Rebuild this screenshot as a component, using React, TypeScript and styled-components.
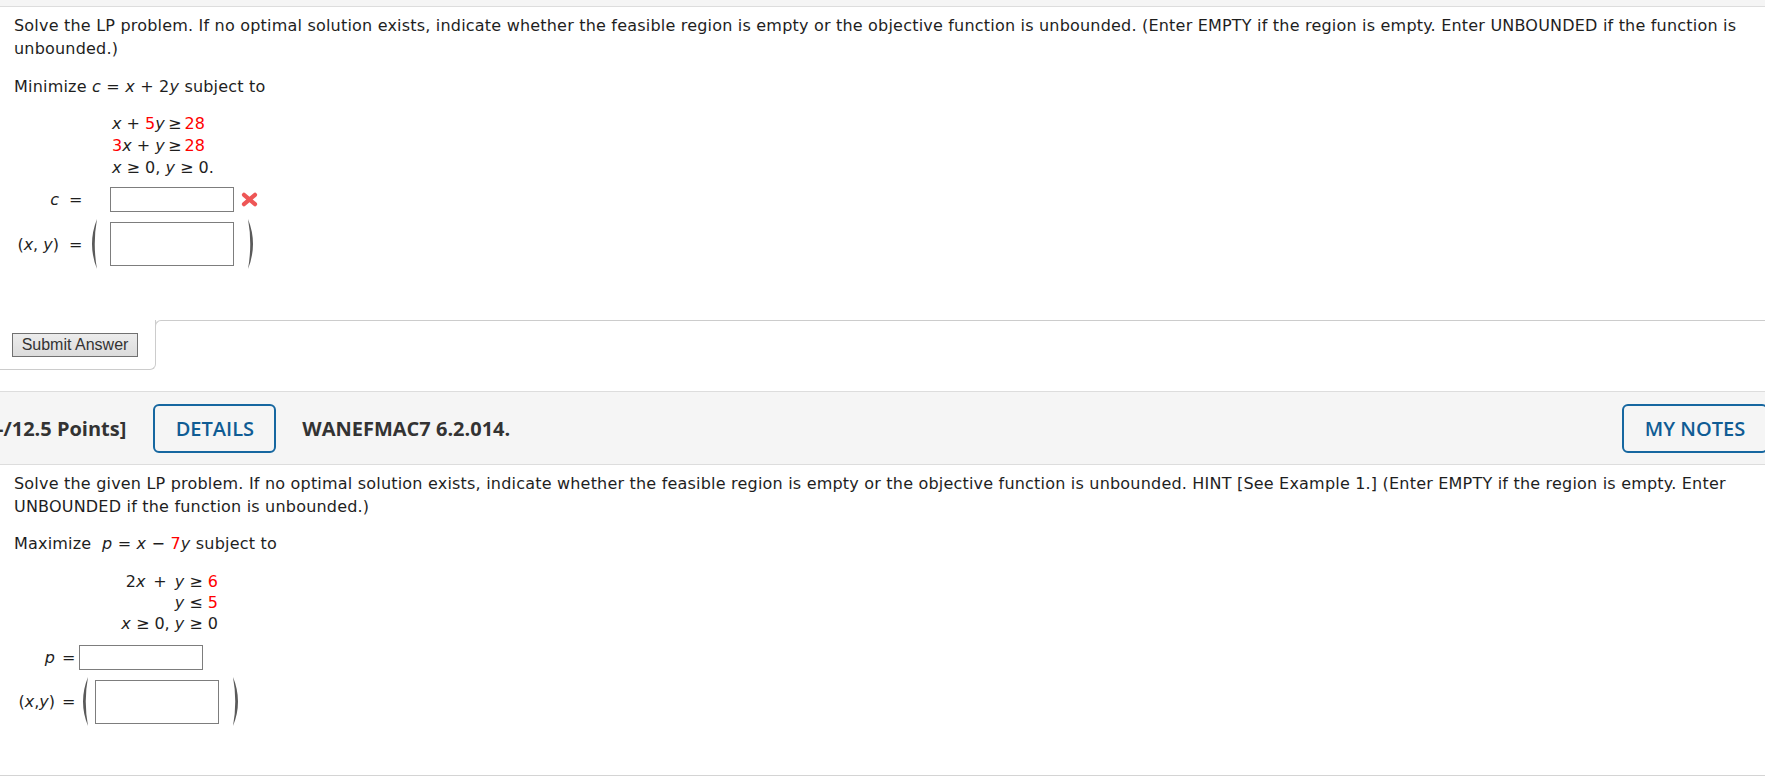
import React from 'react'
import styled, { createGlobalStyle } from 'styled-components'

const GlobalStyle = createGlobalStyle`
  html, body {
    margin: 0;
    padding: 0;
    background: #fff;
    overflow: hidden;
  }
  body {
    font-family: "DejaVu Sans", Verdana, sans-serif;
    font-size: 16px;
    color: #1e1e1e;
  }
`

const TopStrip = styled.div`
  height: 6px;
  background: #f5f5f5;
  border-bottom: 1px solid #ddd;
`

const Question = styled.div`
  padding: 0 14px;
`

const Prompt = styled.p<{ $top: number }>`
  margin: ${p => p.$top}px 0 0;
  line-height: 23px;
  letter-spacing: 0.2px;
`

const Var = styled.i`
  font-style: italic;
`

const Red = styled.span`
  color: #f00;
`

const Constraints = styled.div<{ $top: number; $indent: number; $right?: boolean; $line: number }>`
  margin: ${p => p.$top}px 0 0 ${p => p.$indent}px;
  width: ${p => (p.$right ? '106px' : 'auto')};
  text-align: ${p => (p.$right ? 'right' : 'left')};
  line-height: ${p => p.$line}px;
  white-space: pre;
`

const AnswerRow = styled.div<{ $top: number }>`
  display: flex;
  align-items: center;
  margin-top: ${p => p.$top}px;
`

const Label = styled.div<{ $w: number }>`
  width: ${p => p.$w}px;
  text-align: right;
  white-space: pre;
`

const Equals = styled.span<{ $gap: number }>`
  margin-left: ${p => p.$gap}px;
`

const ParenSlot = styled.div<{ $w: number; $before: number; $after: number }>`
  width: ${p => p.$w}px;
  margin: 0 ${p => p.$after}px 0 ${p => p.$before}px;
  display: flex;
  align-items: center;
`

const AnswerBox = styled.div<{ $h: number }>`
  box-sizing: border-box;
  width: 124px;
  height: ${p => p.$h}px;
  border: 1px solid #7d7d7d;
  background: #fff;
`

const WrongMark = styled.svg`
  margin-left: 7px;
  display: block;
`

const SubmitRow = styled.div`
  display: flex;
  margin-top: 51px;
`

const SubmitTab = styled.div`
  box-sizing: border-box;
  width: 156px;
  height: 50px;
  border-right: 1px solid #ccc;
  border-bottom: 1px solid #ccc;
  border-bottom-right-radius: 6px;
  display: flex;
  align-items: center;
  padding-left: 12px;
`

const AnswerTab = styled.div`
  flex: 1;
  height: 20px;
  margin-left: -1px;
  border-top: 1px solid #ccc;
  border-left: 1px solid #ccc;
  border-top-left-radius: 6px;
`

const SubmitButton = styled.button`
  box-sizing: border-box;
  width: 126px;
  height: 24px;
  padding: 0;
  font-family: "Liberation Sans", Arial, sans-serif;
  font-size: 16px;
  color: #333;
  background: linear-gradient(#ececec, #dcdcdc);
  border: 1px solid #717171;
  border-radius: 0;
`

const Header = styled.div`
  margin-top: 21px;
  height: 72px;
  background: #f5f5f5;
  border-top: 1px solid #ddd;
  border-bottom: 1px solid #ddd;
  display: flex;
  align-items: center;
  font-family: "Open Sans", sans-serif;
  font-size: 20px;
`

const HeaderText = styled.span<{ $gap: number }>`
  margin-left: ${p => p.$gap}px;
  font-weight: 700;
  color: #333;
  white-space: pre;
`

const HeaderButton = styled.div<{ $w: number; $gap?: number; $end?: boolean }>`
  box-sizing: border-box;
  width: ${p => p.$w}px;
  height: 49px;
  margin-left: ${p => (p.$end ? 'auto' : `${p.$gap}px`)};
  margin-right: ${p => (p.$end ? '-3px' : '0')};
  border: 2px solid #1667a0;
  border-radius: 6px;
  display: flex;
  align-items: center;
  justify-content: center;
  color: #0f5c94;
  font-weight: 600;
`

const BottomRule = styled.div`
  margin-top: 49px;
  border-top: 1px solid #d4d4d4;
`

function Paren({ h, flip }: { h: number; flip?: boolean }) {
  const w = 10
  const d = flip
    ? `M1 0 Q${w + 1} ${h / 2} 1 ${h} Q${w - 4.5} ${h / 2} 1 0 Z`
    : `M${w - 1} 0 Q-1 ${h / 2} ${w - 1} ${h} Q4.5 ${h / 2} ${w - 1} 0 Z`
  return (
    <svg width={w} height={h} viewBox={`0 0 ${w} ${h}`}>
      <path d={d} fill="#5a5a5a" />
    </svg>
  )
}

function Cross() {
  return (
    <WrongMark width="17" height="15" viewBox="0 0 17 15">
      <g stroke="#ee5656" strokeWidth="4.2" strokeLinecap="round">
        <line x1="3" y1="2.8" x2="14" y2="12.2" />
        <line x1="14" y1="2.8" x2="3" y2="12.2" />
      </g>
    </WrongMark>
  )
}

export default function App() {
  const ts = '\u2009'
  return (
    <>
      <GlobalStyle />
      <TopStrip />
      <Question>
        <Prompt $top={7}>
          Solve the LP problem. If no optimal solution exists, indicate whether the feasible region is empty or the
          objective function is unbounded. (Enter EMPTY if the region is empty. Enter UNBOUNDED if the function is
          unbounded.)
        </Prompt>
        <Prompt $top={15}>
          Minimize <Var>c</Var> = <Var>x</Var> + 2<Var>y</Var> subject to
        </Prompt>
        <Constraints $top={15} $indent={98} $line={22}>
          <div>
            <Var>x</Var> + <Red>5</Red><Var>y</Var>{ts}≥{ts}<Red>28</Red>
          </div>
          <div>
            <Red>3</Red><Var>x</Var> + <Var>y</Var>{ts}≥{ts}<Red>28</Red>
          </div>
          <div>
            <Var>x</Var> ≥ 0, <Var>y</Var> ≥ 0.
          </div>
        </Constraints>
        <AnswerRow $top={8}>
          <Label $w={45}>
            <Var>c</Var>
          </Label>
          <Equals $gap={10}>=</Equals>
          <ParenSlot $w={10} $before={6} $after={12} />
          <AnswerBox $h={25} />
          <Cross />
        </AnswerRow>
        <AnswerRow $top={7}>
          <Label $w={45}>
            (<Var>x</Var>, <Var>y</Var>)
          </Label>
          <Equals $gap={10}>=</Equals>
          <ParenSlot $w={10} $before={6} $after={12}>
            <Paren h={50} />
          </ParenSlot>
          <AnswerBox $h={44} />
          <ParenSlot $w={10} $before={13} $after={0}>
            <Paren h={50} flip />
          </ParenSlot>
        </AnswerRow>
      </Question>

      <SubmitRow>
        <SubmitTab>
          <SubmitButton>Submit Answer</SubmitButton>
        </SubmitTab>
        <AnswerTab />
      </SubmitRow>

      <Header>
        <HeaderText $gap={-3}>-/12.5 Points]</HeaderText>
        <HeaderButton $w={123} $gap={27}>DETAILS</HeaderButton>
        <HeaderText $gap={26}>WANEFMAC7 6.2.014.</HeaderText>
        <HeaderButton $w={146} $end>MY NOTES</HeaderButton>
      </Header>

      <Question>
        <Prompt $top={7}>
          Solve the given LP problem. If no optimal solution exists, indicate whether the feasible region is empty or
          the objective function is unbounded. HINT [See Example 1.] (Enter EMPTY if the region is empty. Enter
          UNBOUNDED if the function is unbounded.)
        </Prompt>
        <Prompt $top={14}>
          Maximize{'\u00a0'} <Var>p</Var> = <Var>x</Var> − <Red>7</Red><Var>y</Var> subject to
        </Prompt>
        <Constraints $top={16} $indent={98} $line={21} $right>
          <div>
            2<Var>x</Var>{'\u2002'}+{'\u2002'}<Var>y</Var> ≥ <Red>6</Red>
          </div>
          <div>
            <Var>y</Var> ≤ <Red>5</Red>
          </div>
          <div>
            <Var>x</Var> ≥ 0, <Var>y</Var> ≥ 0
          </div>
        </Constraints>
        <AnswerRow $top={11}>
          <Label $w={41}>
            <Var>p</Var>
          </Label>
          <Equals $gap={7}>=</Equals>
          <ParenSlot $w={0} $before={4} $after={0} />
          <AnswerBox $h={25} />
        </AnswerRow>
        <AnswerRow $top={7}>
          <Label $w={41}>
            (<Var>x</Var>,<Var>y</Var>)
          </Label>
          <Equals $gap={7}>=</Equals>
          <ParenSlot $w={10} $before={4} $after={6}>
            <Paren h={49} />
          </ParenSlot>
          <AnswerBox $h={44} />
          <ParenSlot $w={10} $before={13} $after={0}>
            <Paren h={49} flip />
          </ParenSlot>
        </AnswerRow>
      </Question>
      <BottomRule />
    </>
  )
}
